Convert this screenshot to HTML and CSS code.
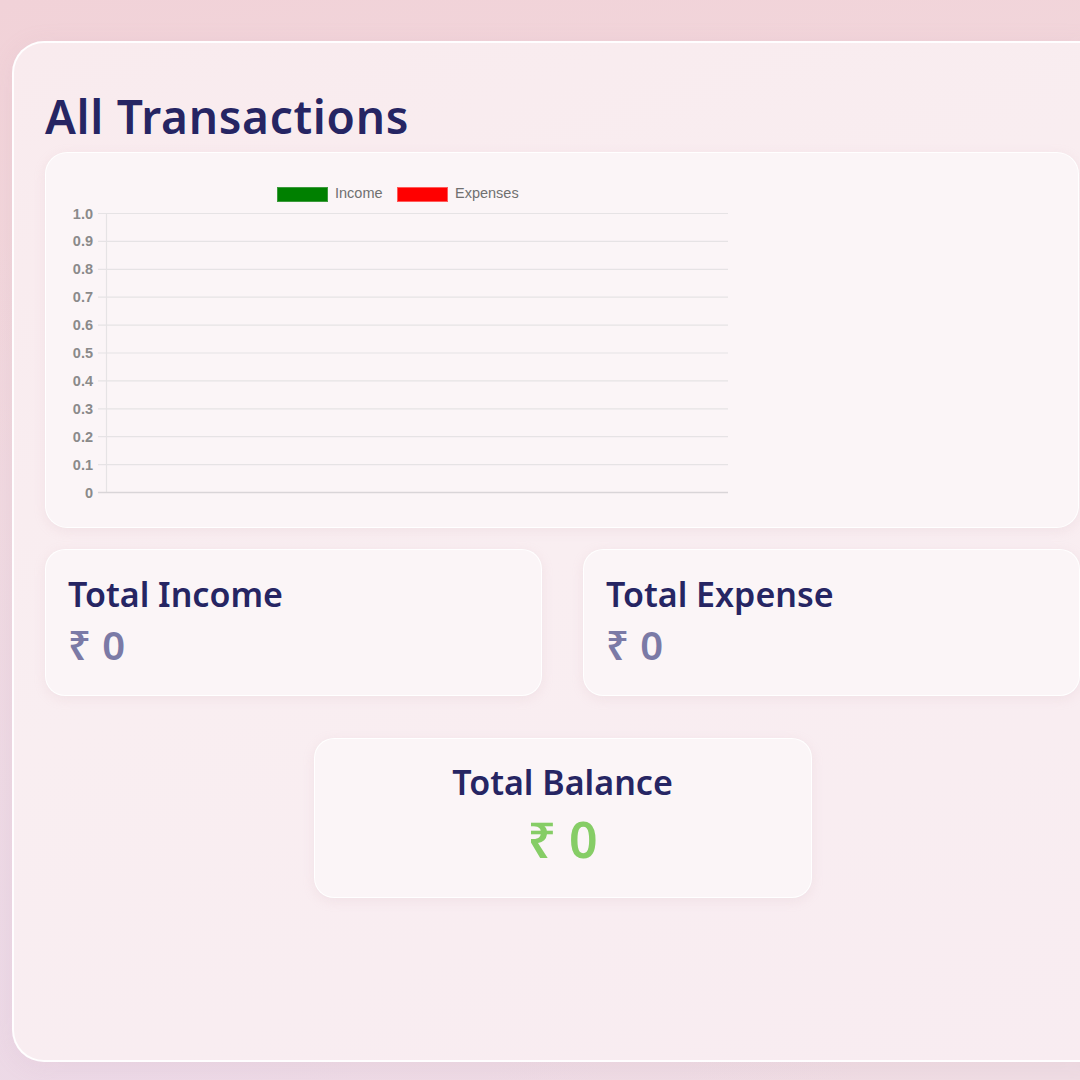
FILE: index.html
```html
<!DOCTYPE html>
<html lang="en">
<head>
<meta charset="utf-8">
<title>All Transactions</title>
<link rel="stylesheet" href="styles.css">
</head>
<body>
<main class="panel">
  <h1 class="title">All Transactions</h1>
  <section class="chart-card">
    <svg class="chart" width="700" height="372" viewBox="0 0 700 372" xmlns="http://www.w3.org/2000/svg">
      <g class="legend">
        <rect x="232.5" y="35.5" width="50" height="14" fill="#008000" stroke="#3c9a3c" stroke-width="1"/>
        <text x="290" y="46">Income</text>
        <rect x="352.5" y="35.5" width="50" height="14" fill="#ff0000" stroke="#ff5a5a" stroke-width="1"/>
        <text x="410" y="46">Expenses</text>
      </g>
      <g class="grid" stroke="#e6e3e5" stroke-width="1.2">
        <line x1="53" y1="61.5" x2="683" y2="61.5"/>
        <line x1="53" y1="89.4" x2="683" y2="89.4"/>
        <line x1="53" y1="117.3" x2="683" y2="117.3"/>
        <line x1="53" y1="145.2" x2="683" y2="145.2"/>
        <line x1="53" y1="173.1" x2="683" y2="173.1"/>
        <line x1="53" y1="201" x2="683" y2="201"/>
        <line x1="53" y1="228.9" x2="683" y2="228.9"/>
        <line x1="53" y1="256.8" x2="683" y2="256.8"/>
        <line x1="53" y1="284.7" x2="683" y2="284.7"/>
        <line x1="53" y1="312.6" x2="683" y2="312.6"/>
        <line x1="61.5" y1="61.5" x2="61.5" y2="340.5"/>
      </g>
      <line x1="53" y1="340.5" x2="683" y2="340.5" stroke="#d9d5d8" stroke-width="1.5"/>
      <g class="ticks" text-anchor="end">
        <text x="48" y="66.5">1.0</text>
        <text x="48" y="94.4">0.9</text>
        <text x="48" y="122.3">0.8</text>
        <text x="48" y="150.2">0.7</text>
        <text x="48" y="178.1">0.6</text>
        <text x="48" y="206">0.5</text>
        <text x="48" y="233.9">0.4</text>
        <text x="48" y="261.8">0.3</text>
        <text x="48" y="289.7">0.2</text>
        <text x="48" y="317.6">0.1</text>
        <text x="48" y="345.5">0</text>
      </g>
    </svg>
  </section>
  <section class="totals">
    <div class="stat-card">
      <h2 class="stat-title">Total Income</h2>
      <p class="stat-value">₹ 0</p>
    </div>
    <div class="stat-card">
      <h2 class="stat-title">Total Expense</h2>
      <p class="stat-value">₹ 0</p>
    </div>
  </section>
  <section class="balance-row">
    <div class="balance-card">
      <h2 class="stat-title">Total Balance</h2>
      <p class="balance-value">₹ 0</p>
    </div>
  </section>
</main>
</body>
</html>
```
FILE: styles.css
```css
html, body {
  margin: 0;
  padding: 0;
}

body {
  width: 1080px;
  height: 1080px;
  overflow: hidden;
  box-sizing: border-box;
  padding: 41px 0 0 12px;
  font-family: "Noto Sans", "DejaVu Sans", sans-serif;
  background:
    radial-gradient(ellipse at 10% 95%, #ecd9e7 0%, rgba(236, 217, 231, 0) 55%),
    linear-gradient(170deg, #f1d2d8 0%, #f2dade 45%, #efdde4 100%);
}

.panel {
  box-sizing: border-box;
  width: 1101px;
  height: 1021px;
  padding: 45px 32px 0 31px;
  border: 2px solid rgba(255, 255, 255, 0.95);
  border-radius: 32px;
  background: linear-gradient(160deg, #f9ebee 0%, #f9eef1 50%, #f8ecf1 100%);
  box-shadow: 0 4px 24px rgba(200, 150, 170, 0.12);
}

.title {
  margin: 0 0 8px 0;
  font-size: 46px;
  line-height: 56px;
  font-weight: 600;
  color: #262563;
  letter-spacing: 0.7px;
}

.chart-card {
  box-sizing: border-box;
  height: 376px;
  border: 1.5px solid rgba(255, 255, 255, 0.95);
  border-radius: 22px;
  background: #fbf5f7;
  box-shadow: 0 3px 12px rgba(210, 170, 185, 0.18);
}

.chart {
  display: block;
  margin: -1.5px 0 0 -1.5px;
}

.legend text {
  font-family: "Liberation Sans", Arial, sans-serif;
  font-size: 14.5px;
  fill: #707070;
}

.ticks text {
  font-family: "Liberation Sans", Arial, sans-serif;
  font-size: 14.5px;
  font-weight: 700;
  fill: #8a8a8a;
}

.totals {
  display: grid;
  grid-template-columns: 497px 497px;
  column-gap: 41px;
  margin-top: 21px;
}

.stat-card {
  box-sizing: border-box;
  height: 147px;
  padding: 24px 22px 0 22px;
  border: 1.5px solid rgba(255, 255, 255, 0.95);
  border-radius: 20px;
  background: #fbf5f7;
  box-shadow: 0 3px 12px rgba(210, 170, 185, 0.18);
}

.stat-title {
  margin: 0;
  font-size: 34px;
  line-height: 41px;
  font-weight: 600;
  color: #262563;
}

.stat-value {
  margin: 7px 0 0 0;
  font-size: 40px;
  line-height: 46px;
  font-weight: 600;
  color: #7b7aa6;
  letter-spacing: 0.5px;
}

.balance-row {
  display: flex;
  justify-content: center;
  width: 1035px;
  margin-top: 42px;
}

.balance-card {
  box-sizing: border-box;
  width: 498px;
  height: 160px;
  padding-top: 23px;
  text-align: center;
  border: 1.5px solid rgba(255, 255, 255, 0.95);
  border-radius: 20px;
  background: #fbf5f7;
  box-shadow: 0 3px 12px rgba(210, 170, 185, 0.18);
}

.balance-value {
  margin: 6px 0 0 0;
  font-size: 50px;
  line-height: 60px;
  font-weight: 600;
  color: #86cd66;
}
```
